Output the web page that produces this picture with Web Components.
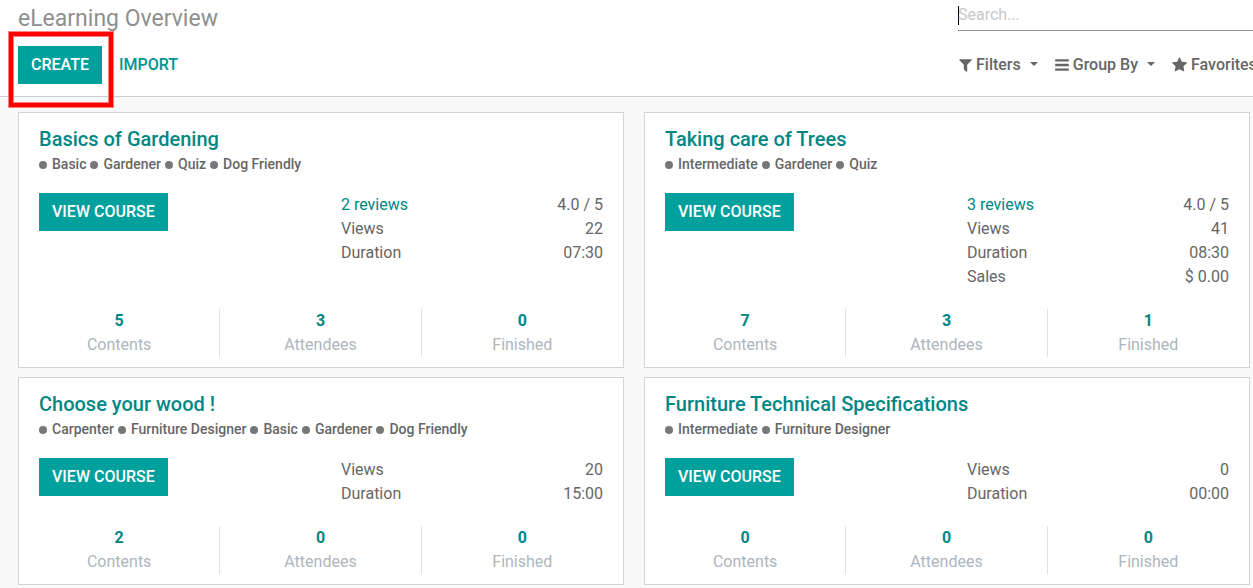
<!DOCTYPE html>
<html lang="en">
<head>
<meta charset="utf-8">
<title>eLearning Overview</title>
<style>
  html { overflow-x: hidden; }
  body {
    margin: 0;
    background: #f9f9f9;
    color: #666;
    font: 400 16px/24px Roboto, "Noto Sans", sans-serif;
    --teal: #00a09d;
    --link: #008784;
    --line: #ced4da;
  }
</style>
</head>
<body>
<control-panel heading="eLearning Overview">
  <action-button slot="actions" marked>Create</action-button>
  <action-button slot="actions" plain>Import</action-button>
  <search-field slot="search"></search-field>
  <filter-menu slot="menus" icon="filter" caret>Filters</filter-menu>
  <filter-menu slot="menus" icon="bars" caret>Group By</filter-menu>
  <filter-menu slot="menus" icon="star" caret>Favorites</filter-menu>
</control-panel>
<course-board>
  <course-card heading="Basics of Gardening" contents="5" attendees="3" finished="0">
    <course-tag slot="tags">Basic</course-tag>
    <course-tag slot="tags">Gardener</course-tag>
    <course-tag slot="tags">Quiz</course-tag>
    <course-tag slot="tags">Dog Friendly</course-tag>
    <course-facts reviews="2 reviews|4.0 / 5" views="22" duration="07:30"></course-facts>
  </course-card>
  <course-card heading="Taking care of Trees" contents="7" attendees="3" finished="1">
    <course-tag slot="tags">Intermediate</course-tag>
    <course-tag slot="tags">Gardener</course-tag>
    <course-tag slot="tags">Quiz</course-tag>
    <course-facts reviews="3 reviews|4.0 / 5" views="41" duration="08:30" sales="$ 0.00"></course-facts>
  </course-card>
  <course-card heading="Choose your wood !" contents="2" attendees="0" finished="0">
    <course-tag slot="tags">Carpenter</course-tag>
    <course-tag slot="tags">Furniture Designer</course-tag>
    <course-tag slot="tags">Basic</course-tag>
    <course-tag slot="tags">Gardener</course-tag>
    <course-tag slot="tags">Dog Friendly</course-tag>
    <course-facts views="20" duration="15:00"></course-facts>
  </course-card>
  <course-card heading="Furniture Technical Specifications" contents="0" attendees="0" finished="0">
    <course-tag slot="tags">Intermediate</course-tag>
    <course-tag slot="tags">Furniture Designer</course-tag>
    <course-facts views="0" duration="00:00"></course-facts>
  </course-card>
</course-board>
<script>
class BaseElement extends HTMLElement {
  connectedCallback() {
    if (this.shadowRoot) return;
    this.attachShadow({ mode: 'open' }).innerHTML = this.render();
  }
  attr(name) { return this.getAttribute(name) || ''; }
}

customElements.define('control-panel', class extends BaseElement {
  render() {
    return `<style>
      :host { display: block; background: #fff; border-bottom: 1px solid #c9ccd2; }
      .row { display: flex; justify-content: space-between; padding-left: 18px; }
      .top { height: 36px; }
      .bottom { height: 60px; }
      h1 { margin: 0; font-size: 23px; line-height: 38px; font-weight: 400; color: #8f8f8f; }
      .actions { display: flex; align-items: flex-start; padding-top: 10px; gap: 4px; }
      .side { flex: 0 0 295px; min-width: 0; }
      .menus { display: flex; align-items: flex-start; padding-top: 17px; gap: 16px; }
    </style>
    <div class="row top"><h1>${this.attr('heading')}</h1><div class="side"><slot name="search"></slot></div></div>
    <div class="row bottom">
      <div class="actions"><slot name="actions"></slot></div>
      <div class="side menus"><slot name="menus"></slot></div>
    </div>`;
  }
});

customElements.define('action-button', class extends BaseElement {
  render() {
    return `<style>
      :host { display: inline-block; position: relative; }
      button {
        display: block; margin: 0; padding: 6px 12px; border: 1px solid var(--teal); border-radius: 0;
        background: var(--teal); color: #fff; font: inherit; font-weight: 500;
        text-transform: uppercase; white-space: nowrap; cursor: pointer;
      }
      :host([plain]) button { background: transparent; border-color: transparent; color: #00958f; }
      .mark {
        position: absolute; inset: -14px -11px -23px -9px; pointer-events: none; z-index: 1;
        border: 4px solid #f00; box-shadow: 0 0 0 1px #ff8080, inset 0 0 0 1px #ff8080;
      }
    </style>
    <button type="button"><slot></slot></button>${this.hasAttribute('marked') ? '<div class="mark"></div>' : ''}`;
  }
});

customElements.define('search-field', class extends BaseElement {
  render() {
    return `<style>
      :host { display: block; padding-top: 6px; border-bottom: 1px solid #8f8f8f; }
      input {
        display: block; box-sizing: border-box; width: 100%; height: 24px; margin: 0; padding: 0 0 8px; border: 0;
        outline: 0; font: inherit; line-height: 16px; color: #666;
        background: linear-gradient(#000, #000) 0 0 / 1px 19px no-repeat;
      }
      input::placeholder { color: #c8c8c8; opacity: 1; }
    </style>
    <input type="text" placeholder="Search..." aria-label="Search">`;
  }
});

const ICONS = {
  filter: ['190 0 1412 1792', 13, 'M1595 295q17 41-14 70l-493 493v742q0 42-39 59-13 5-25 5-27 0-45-19l-256-256q-19-19-19-45v-486l-493-493q-31-29-14-70 17-39 59-39h1280q42 0 59 39z'],
  bars: ['128 0 1536 1792', 14, 'M1664 1344v128q0 26-19 45t-45 19h-1408q-26 0-45-19t-19-45v-128q0-26 19-45t45-19h1408q26 0 45 19t19 45zm0-512v128q0 26-19 45t-45 19h-1408q-26 0-45-19t-19-45v-128q0-26 19-45t45-19h1408q26 0 45 19t19 45zm0-512v128q0 26-19 45t-45 19h-1408q-26 0-45-19t-19-45v-128q0-26 19-45t45-19h1408q26 0 45 19t19 45z'],
  star: ['64 0 1664 1792', 15, 'M1728 647q0 22-26 48l-363 354 86 500q1 7 1 20 0 21-10.500 35.500t-30.500 14.500q-19 0-40-12l-449-236-449 236q-22 12-40 12-21 0-31.500-14.500t-10.500-35.500q0-6 2-20l86-500-364-354q-25-27-25-48 0-37 56-46l502-73 225-455q19-41 49-41t49 41l225 455 502 73q56 9 56 46z']
};

customElements.define('filter-menu', class extends BaseElement {
  render() {
    const [box, width, path] = ICONS[this.attr('icon')];
    return `<style>
      :host { display: block; flex: none; }
      button {
        display: flex; align-items: center; margin: 0; padding: 0; border: 0; background: none;
        font: inherit; font-weight: 500; color: #666; white-space: nowrap; cursor: pointer;
      }
      svg { display: block; height: 16px; margin: 0 4px 0 1px; fill: #666; }
      .caret { margin: 0 0 2px 9px; border: solid transparent; border-width: 4px 4px 0; border-top-color: #666; }
    </style>
    <button type="button" aria-haspopup="true">
      <svg width="${width}" height="16" viewBox="${box}" aria-hidden="true"><path d="${path}"/></svg>
      <slot></slot>${this.hasAttribute('caret') ? '<span class="caret"></span>' : ''}
    </button>`;
  }
});

customElements.define('course-board', class extends BaseElement {
  render() {
    return `<style>
      :host { display: grid; grid-template-columns: repeat(2, minmax(0, 1fr)); gap: 9px 20px; padding: 15px 3px 3px 18px; }
    </style><slot></slot>`;
  }
});

customElements.define('course-tag', class extends BaseElement {
  render() {
    return `<style>
      :host { display: flex; align-items: center; gap: 5px; font-size: 14px; line-height: 21px; font-weight: 500; color: #666; }
      i { width: 8px; height: 8px; border-radius: 50%; background: #777; }
    </style><i></i><span><slot></slot></span>`;
  }
});

customElements.define('course-facts', class extends BaseElement {
  render() {
    const rows = [];
    if (this.hasAttribute('reviews')) {
      const [label, score] = this.attr('reviews').split('|');
      rows.push([`<a href="#reviews">${label}</a>`, score]);
    }
    rows.push(['Views', this.attr('views')], ['Duration', this.attr('duration')]);
    if (this.hasAttribute('sales')) rows.push(['Sales', this.attr('sales')]);
    return `<style>
      :host { display: block; }
      table { width: 100%; border-collapse: collapse; }
      th, td { padding: 0; font-weight: 400; line-height: 24px; text-align: left; }
      td { text-align: right; }
      a { color: var(--link); text-decoration: none; }
    </style>
    <table>${rows.map(([k, v]) => `<tr><th scope="row">${k}</th><td>${v}</td></tr>`).join('')}</table>`;
  }
});

customElements.define('course-card', class extends BaseElement {
  render() {
    const totals = ['Contents', 'Attendees', 'Finished'];
    return `<style>
      :host { display: flex; flex-direction: column; background: #fff; border: 1px solid var(--line); padding: 11px 0 10px; }
      h2 { margin: 0 20px; font-size: 20px; line-height: 30px; font-weight: 500; }
      a { color: var(--link); text-decoration: none; }
      .tags { display: flex; flex-wrap: wrap; gap: 0 4px; margin: 0 20px; }
      .body { display: grid; grid-template-columns: 1fr 1fr; column-gap: 20px; margin: 18px 20px 20px; flex: 1; align-items: start; }
      .facts { display: block; margin-left: 10px; }
      .totals { display: grid; grid-template-columns: repeat(3, 1fr); }
      .totals a { display: flex; flex-direction: column; text-align: center; color: #adb5bd; }
      .totals a:not(:last-child) { border-right: 1px solid #dee2e6; }
      b { font-weight: 700; color: var(--link); }
    </style>
    <h2><a href="#course">${this.attr('heading')}</a></h2>
    <div class="tags"><slot name="tags"></slot></div>
    <div class="body">
      <div><action-button>View course</action-button></div>
      <slot class="facts"></slot>
    </div>
    <div class="totals">${totals.map(t => `<a href="#${t.toLowerCase()}"><b>${this.attr(t.toLowerCase())}</b><span>${t}</span></a>`).join('')}</div>`;
  }
});
</script>
</body>
</html>
